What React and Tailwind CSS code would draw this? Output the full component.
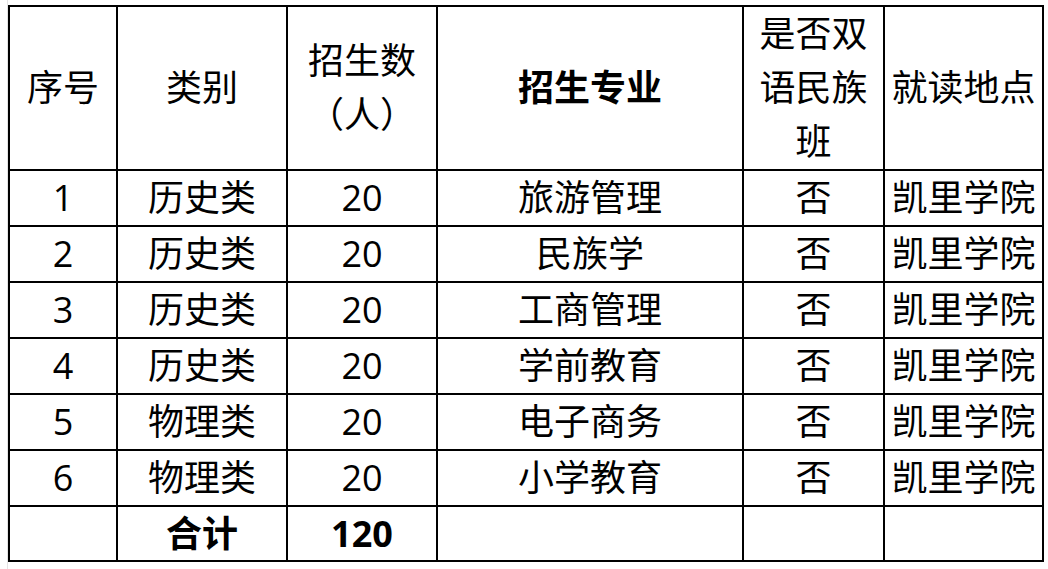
const rows = [
  ['1', '历史类', '20', '旅游管理', '否', '凯里学院'],
  ['2', '历史类', '20', '民族学', '否', '凯里学院'],
  ['3', '历史类', '20', '工商管理', '否', '凯里学院'],
  ['4', '历史类', '20', '学前教育', '否', '凯里学院'],
  ['5', '物理类', '20', '电子商务', '否', '凯里学院'],
  ['6', '物理类', '20', '小学教育', '否', '凯里学院'],
];

const cell = 'border-2 border-black p-0 text-center align-middle whitespace-nowrap';

export default function App() {
  return (
    <div
      className="flex h-[569px] w-[1048px] bg-white text-black"
      style={{ fontFamily: '"Open Sans", "Noto Sans CJK SC", sans-serif' }}
    >
      <div className="ml-[7px] w-px bg-[#e4e4e4]" />
      <div className="pt-[5px]">
        <table className="table-fixed border-collapse text-[36px] leading-[40px]">
          <colgroup>
            <col className="w-[108px]" />
            <col className="w-[170px]" />
            <col className="w-[150px]" />
            <col className="w-[306px]" />
            <col className="w-[141px]" />
            <col className="w-[159px]" />
          </colgroup>
          <thead className="leading-[54px]">
            <tr className="h-[163px]">
              <th className={`${cell} font-normal`}>序号</th>
              <th className={`${cell} font-normal`}>类别</th>
              <th className={`${cell} font-normal`}>
                招生数
                <br />
                （人）
              </th>
              <th className={`${cell} font-bold`}>招生专业</th>
              <th className={`${cell} font-normal`}>
                是否双
                <br />
                语民族
                <br />班
              </th>
              <th className={`${cell} font-normal`}>就读地点</th>
            </tr>
          </thead>
          <tbody>
            {rows.map((r) => (
              <tr key={r[0]} className="h-[56px]">
                {r.map((v, i) => (
                  <td key={i} className={cell}>
                    {v}
                  </td>
                ))}
              </tr>
            ))}
            <tr className="h-[55px] font-bold">
              <td className={cell}></td>
              <td className={cell}>合计</td>
              <td className={cell}>120</td>
              <td className={cell}></td>
              <td className={cell}></td>
              <td className={cell}></td>
            </tr>
          </tbody>
        </table>
      </div>
    </div>
  );
}
